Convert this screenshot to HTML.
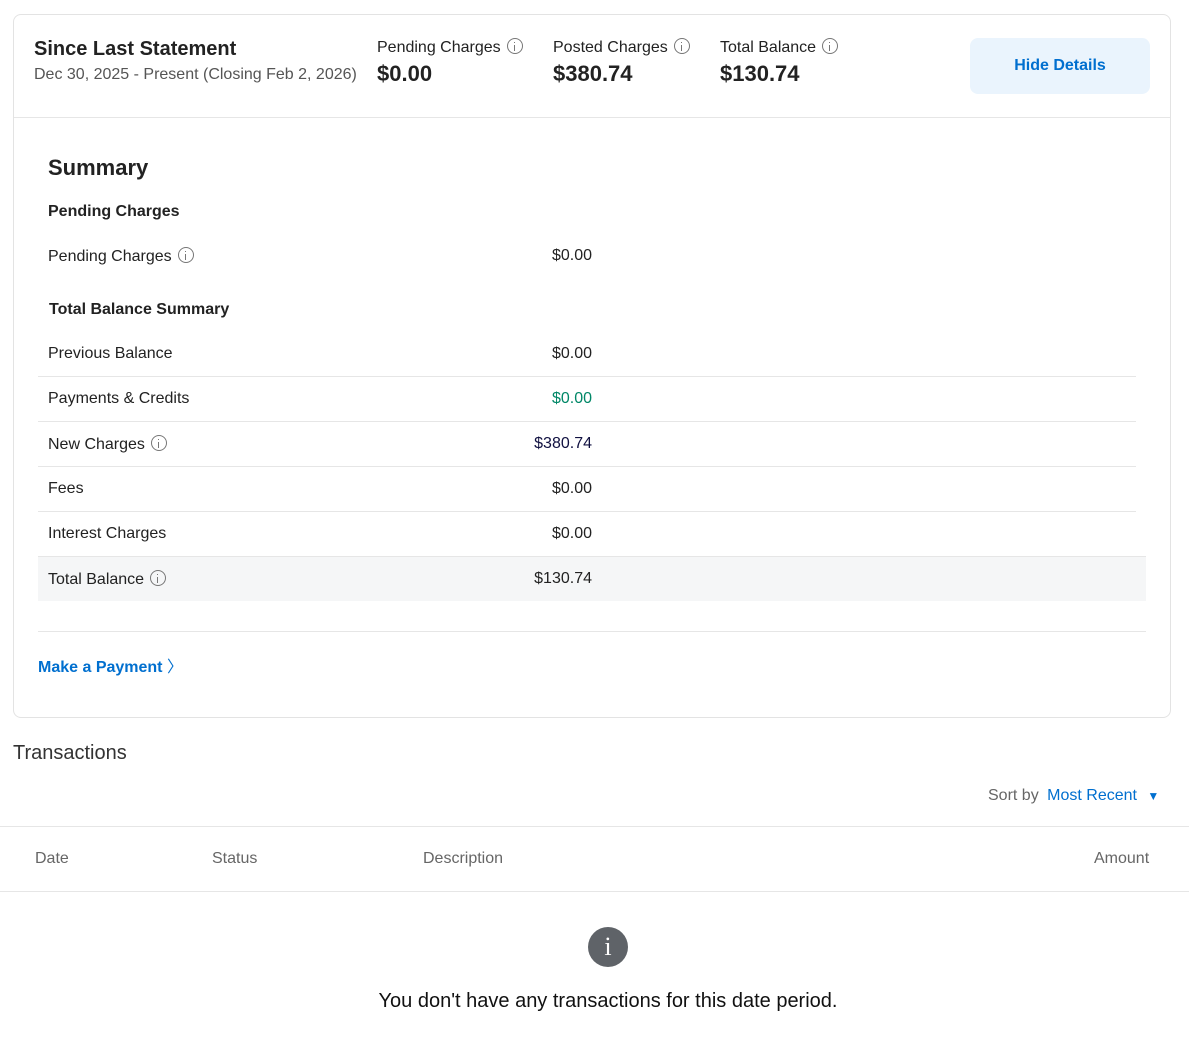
<!DOCTYPE html>
<html><head><meta charset="utf-8"><style>
*{margin:0;padding:0;box-sizing:border-box}
body{width:1189px;height:1044px;background:#fff;font-family:"Liberation Sans",Arial,sans-serif;color:#333;position:relative;overflow:hidden}
.a{position:absolute;white-space:nowrap}
.card{position:absolute;left:13px;top:14px;width:1158px;height:704px;border:1px solid #e3e3e3;border-radius:8px}
.hl{position:absolute;height:1px;background:#e6e6e6}
.i{display:inline-block;width:16px;height:16px;border:1.3px solid #777;border-radius:50%;vertical-align:-2px;margin-left:6px;position:relative}
.i:before{content:"";position:absolute;left:6px;top:3px;width:1.4px;height:1.4px;background:#777}
.i:after{content:"";position:absolute;left:6px;top:6px;width:1.4px;height:6px;background:#777}
.lbl{font-size:16px;color:#222}
.val{font-size:16px;color:#222;text-align:right;width:120px}
</style></head><body>
<div class="card"></div>
<div class="a" style="left:34px;top:38px;font-size:20px;font-weight:bold;color:#222">Since Last Statement</div>
<div class="a" style="left:34px;top:66px;font-size:16px;color:#555">Dec 30, 2025 - Present (Closing Feb 2, 2026)</div>
<div class="a" style="left:377px;top:38px;font-size:16px;color:#222">Pending Charges<span class="i"></span></div>
<div class="a" style="left:377px;top:61px;font-size:22px;font-weight:bold;color:#222">$0.00</div>
<div class="a" style="left:553px;top:38px;font-size:16px;color:#222">Posted Charges<span class="i"></span></div>
<div class="a" style="left:553px;top:61px;font-size:22px;font-weight:bold;color:#222">$380.74</div>
<div class="a" style="left:720px;top:38px;font-size:16px;color:#222">Total Balance<span class="i"></span></div>
<div class="a" style="left:720px;top:61px;font-size:22px;font-weight:bold;color:#222">$130.74</div>
<div class="a" style="left:970px;top:38px;width:180px;height:56px;background:#eaf4fd;border-radius:8px;color:#006fcf;font-weight:bold;font-size:16px;line-height:56px;text-align:center;padding-top:0px">Hide Details</div>
<div class="hl" style="left:14px;top:117px;width:1156px"></div>
<div class="a" style="left:48px;top:155px;font-size:22px;font-weight:bold;color:#222">Summary</div>
<div class="a" style="left:48px;top:203px;font-size:16px;font-weight:bold;color:#222">Pending Charges</div>
<div class="a lbl" style="left:48px;top:247px">Pending Charges<span class="i"></span></div>
<div class="a val" style="left:472px;top:247px">$0.00</div>
<div class="a" style="left:49px;top:301px;font-size:16px;font-weight:bold;color:#222">Total Balance Summary</div>
<div class="a lbl" style="left:48px;top:345px">Previous Balance</div>
<div class="a val" style="left:472px;top:345px">$0.00</div>
<div class="hl" style="left:38px;top:376px;width:1098px"></div>
<div class="a lbl" style="left:48px;top:390px">Payments &amp; Credits</div>
<div class="a val" style="left:472px;top:390px;color:#008767">$0.00</div>
<div class="hl" style="left:38px;top:421px;width:1098px"></div>
<div class="a lbl" style="left:48px;top:435px">New Charges<span class="i"></span></div>
<div class="a val" style="left:472px;top:435px;color:#101040">$380.74</div>
<div class="hl" style="left:38px;top:466px;width:1098px"></div>
<div class="a lbl" style="left:48px;top:480px">Fees</div>
<div class="a val" style="left:472px;top:480px">$0.00</div>
<div class="hl" style="left:38px;top:511px;width:1098px"></div>
<div class="a lbl" style="left:48px;top:525px">Interest Charges</div>
<div class="a val" style="left:472px;top:525px">$0.00</div>
<div class="a" style="left:38px;top:556px;width:1108px;height:45px;background:#f5f6f7;border-top:1px solid #e6e6e6"></div>
<div class="a lbl" style="left:48px;top:570px">Total Balance<span class="i"></span></div>
<div class="a val" style="left:472px;top:570px">$130.74</div>
<div class="hl" style="left:38px;top:631px;width:1108px"></div>
<div class="a" style="left:38px;top:653px;font-size:16px;font-weight:bold;color:#006fcf">Make a Payment <span style="font-weight:normal">〉</span></div>
<div class="a" style="left:13px;top:742px;font-size:20px;color:#333">Transactions</div>
<div class="a" style="left:988px;top:787px;font-size:16px;color:#666">Sort by <span style="color:#006fcf;margin-left:4px">Most Recent</span> <span style="color:#006fcf;font-size:12px;margin-left:6px">▼</span></div>
<div class="hl" style="left:0;top:826px;width:1189px"></div>
<div class="a" style="left:35px;top:850px;font-size:16px;color:#666">Date</div>
<div class="a" style="left:212px;top:850px;font-size:16px;color:#666">Status</div>
<div class="a" style="left:423px;top:850px;font-size:16px;color:#666">Description</div>
<div class="a" style="left:1094px;top:850px;font-size:16px;color:#666">Amount</div>
<div class="hl" style="left:0;top:891px;width:1189px"></div>
<div class="a" style="left:588px;top:927px;width:40px;height:40px;border-radius:50%;background:#5f6368;color:#fff;font-family:'Liberation Serif',serif;font-size:26px;line-height:40px;text-align:center">i</div>
<div class="a" style="left:0;width:1216px;top:990px;font-size:20px;color:#111;text-align:center">You don't have any transactions for this date period.</div>
</body></html>
